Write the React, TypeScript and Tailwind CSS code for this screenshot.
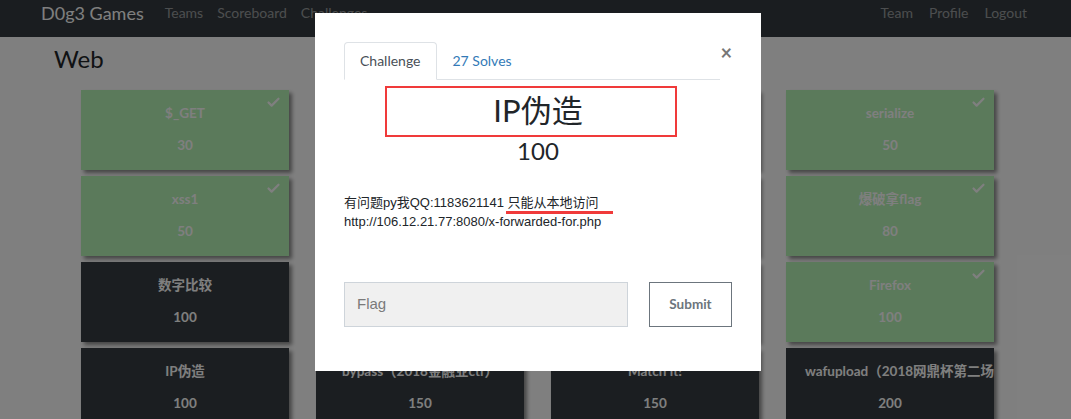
import React from "react";
import { Check } from "lucide-react";

type Card = { name: string; value: number; solved: boolean };

const columns: Card[][] = [
  [
    { name: "$_GET", value: 30, solved: true },
    { name: "xss1", value: 50, solved: true },
    { name: "数字比较", value: 100, solved: false },
    { name: "IP伪造", value: 100, solved: false },
  ],
  [
    { name: "$_POST", value: 30, solved: true },
    { name: "sql1", value: 50, solved: true },
    { name: "web1", value: 100, solved: false },
    { name: "bypass（2018金融业ctf）", value: 150, solved: false },
  ],
  [
    { name: "phpinfo", value: 30, solved: true },
    { name: "sql2", value: 80, solved: true },
    { name: "web2", value: 100, solved: false },
    { name: "Match it!", value: 150, solved: false },
  ],
  [
    { name: "serialize", value: 50, solved: true },
    { name: "爆破拿flag", value: 80, solved: true },
    { name: "Firefox", value: 100, solved: true },
    { name: "wafupload（2018网鼎杯第二场）", value: 200, solved: false },
  ],
];

function ChallengeCard({ card }: { card: Card }) {
  return (
    <div
      className={`relative h-[80px] w-[208px] overflow-hidden pt-[15px] text-white shadow-[3px_3px_4px_rgba(0,0,0,0.45)] ${
        card.solved ? "bg-[#b6f4b6]" : "bg-[#363c42]"
      }`}
    >
      {card.solved && (
        <Check
          className="absolute right-[8px] top-[5px] text-white"
          size={15}
          strokeWidth={3.5}
        />
      )}
      <div className="whitespace-nowrap px-[19px] text-center text-[13.5px] font-bold leading-[16px]">
        {card.name}
      </div>
      <div className="mt-[16px] text-center text-[13.5px] font-bold leading-[16px]">
        {card.value}
      </div>
    </div>
  );
}

export default function App() {
  return (
    <div className="relative h-[419px] w-full overflow-hidden bg-white font-['Lato','Noto_Sans_CJK_SC',sans-serif]">
      {/* navbar */}
      <nav className="flex h-[37px] items-start bg-[#343a40] pl-[41px] pr-[37px] pt-[2px]">
        <span className="text-[18px] leading-[22px] text-white">D0g3 Games</span>
        <div className="ml-[14px] flex text-[14px] leading-[22px] text-white/50">
          <span className="px-[7px]">Teams</span>
          <span className="px-[7px]">Scoreboard</span>
          <span className="px-[7px]">Challenges</span>
        </div>
        <div className="ml-auto flex gap-x-[2px] text-[14px] leading-[22px] text-white/50">
          <span className="px-[7px]">Team</span>
          <span className="px-[7px]">Profile</span>
          <span className="px-[7px]">Logout</span>
        </div>
      </nav>

      <div className="pl-[54px]">
        <h1 className="mt-[7px] text-[24px] leading-[29px] text-[#212529]">Web</h1>
        <div className="ml-[27px] mt-[17px] flex gap-x-[27px]">
          {columns.map((col, i) => (
            <div key={i} className="flex flex-col gap-y-[6px]">
              {col.map((c) => (
                <ChallengeCard key={c.name} card={c} />
              ))}
            </div>
          ))}
        </div>
      </div>

      {/* backdrop */}
      <div className="absolute inset-0 bg-black/50" />

      {/* modal */}
      <div className="absolute left-[315px] top-[13px] h-[358px] w-[446px] bg-white px-[29px] pt-[29px]">
        <div className="flex items-start">
          <div className="flex flex-1 border-b border-[#dee2e6]">
            <div className="-mb-px rounded-t-[4px] border border-b-white border-[#dee2e6] bg-white px-[15px] text-[14px] leading-[35px] text-[#495057]">
              Challenge
            </div>
            <div className="pl-[16px] text-[14px] leading-[37px] text-[#337ab7]">27 Solves</div>
          </div>
          <div className="w-[12px] pt-[3px] text-right text-[20px] font-bold leading-[14px] text-[#777]">
            ×
          </div>
        </div>

        <div className="relative mt-[6px] h-[51px]">
          <div className="absolute left-[41px] top-0 h-[51px] w-[292px] border-2 border-[#f03a3a]" />
          <div className="pt-[5px] text-center text-[31px] leading-[38px] text-[#212529]">IP伪造</div>
        </div>
        <div className="-mt-[1px] text-center text-[24px] leading-[29px] text-[#212529]">100</div>

        <div className="mt-[28px] font-['Liberation_Sans','Noto_Sans_CJK_SC',sans-serif] text-[13px] leading-[19px] text-[#212529]">
          <p>
            有问题py我QQ:1183621141{" "}
            <span className="relative">
              只能从本地访问
              <span className="absolute left-[-2px] top-[16px] h-[3px] w-[107px] bg-[#f03a3a]" />
            </span>
          </p>
          <p>http://106.12.21.77:8080/x-forwarded-for.php</p>
        </div>

        <div className="mt-[51px] flex items-center">
          <div className="flex h-[45px] w-[284px] items-center border border-[#ced4da] bg-[#f0f0f0] pl-[12px] font-['Liberation_Sans',sans-serif] text-[15px] text-[#7a7a7a]">
            Flag
          </div>
          <div className="ml-[21px] flex h-[45px] w-[83px] items-center justify-center border border-[#6c757d] text-[13.5px] font-bold text-[#6c757d]">
            Submit
          </div>
        </div>
      </div>
    </div>
  );
}
